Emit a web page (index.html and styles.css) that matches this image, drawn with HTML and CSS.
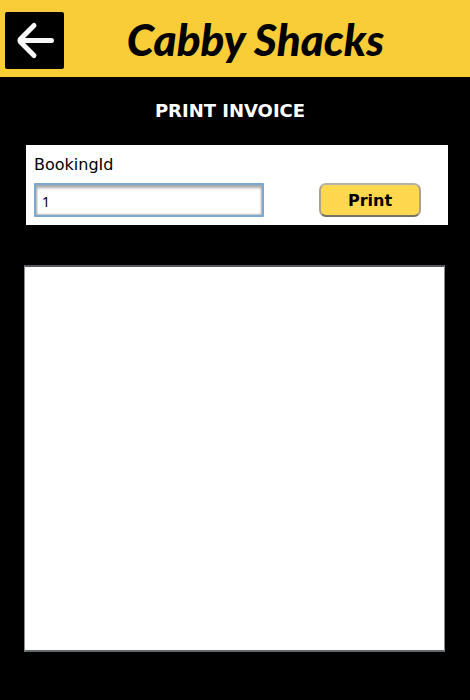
FILE: index.html
```html
<!DOCTYPE html>
<html lang="en">
<head>
<meta charset="utf-8">
<meta name="viewport" content="width=device-width, initial-scale=1">
<title>Cabby Shacks</title>
<link rel="stylesheet" href="styles.css">
</head>
<body>
<header class="header">
  <button class="back" type="button" aria-label="Back">
    <svg class="back-icon" viewBox="0 0 59 57" aria-hidden="true">
      <path d="M46.500 28.500H16M29 13.500L15.500 27Q14.500 28.500 15.500 30L29 43.500M17 26V31"/>
    </svg>
  </button>
  <div class="brand">Cabby Shacks</div>
</header>
<main class="content">
  <h1 class="title">PRINT INVOICE</h1>
  <form class="search">
    <label class="label" for="booking">BookingId</label>
    <div class="row">
      <input class="field" id="booking" type="text" value="1">
      <button class="print" type="button">Print</button>
    </div>
  </form>
  <section class="invoice" aria-label="Invoice"></section>
</main>
</body>
</html>
```
FILE: styles.css
```css
* {
  box-sizing: border-box;
}

body {
  margin: 0;
  min-height: 100vh;
  display: flex;
  flex-direction: column;
  background: #000;
  color: #000;
  font-family: "DejaVu Sans", sans-serif;
}

.header {
  display: flex;
  align-items: center;
  padding: 12px 5px 8px;
  background: #f8cd38;
}

.back {
  width: 59px;
  height: 57px;
  padding: 0;
  border: 0;
  border-radius: 2px;
  background: #000;
}

.back-icon {
  display: block;
  width: 100%;
  height: 100%;
  fill: none;
  stroke: #f8f8f8;
  stroke-width: 5;
  stroke-linecap: round;
  stroke-linejoin: round;
}

.brand {
  flex: 1;
  padding: 0 18px 4px 0;
  text-align: center;
  font: italic 900 44px/52px Lato, sans-serif;
}

.content {
  flex: 1;
  display: flex;
  flex-direction: column;
  padding: 24px 22px 48px 24px;
}

.title {
  margin: 0 12px 24px 0;
  text-align: center;
  color: #fff;
  font-size: 18px;
  font-weight: bold;
  line-height: 20px;
}

.search {
  margin: 0 0 40px 2px;
  padding: 10px 27px 8px 8px;
  background: #fff;
}

.label {
  display: block;
  margin-bottom: 8px;
  font-size: 16px;
  line-height: 20px;
}

.row {
  display: flex;
  justify-content: space-between;
  gap: 24px;
}

.field {
  flex: 0 1 230px;
  min-width: 0;
  height: 34px;
  padding: 2px 6px 0;
  border: 2px solid #7ba7d3;
  border-radius: 1px;
  background: #fff;
  box-shadow: inset 0 3px 3px #aaa, inset 0 0 2px 1px #bbb;
  font: 14px "Noto Sans", sans-serif;
  outline: 0;
}

.print {
  width: 102px;
  height: 34px;
  padding: 0;
  border: 2px solid;
  border-color: #b5b2a8 #aaa28a #777263 #aaa28a;
  border-radius: 7px;
  background: #ffd84f;
  font: bold 16px "DejaVu Sans", sans-serif;
}

.invoice {
  flex: 1;
  margin-right: 3px;
  border: 1px solid #8c8c94;
  border-top: 2px solid #55555c;
  border-bottom: 2px solid #64696e;
  background: #fff;
}
```
